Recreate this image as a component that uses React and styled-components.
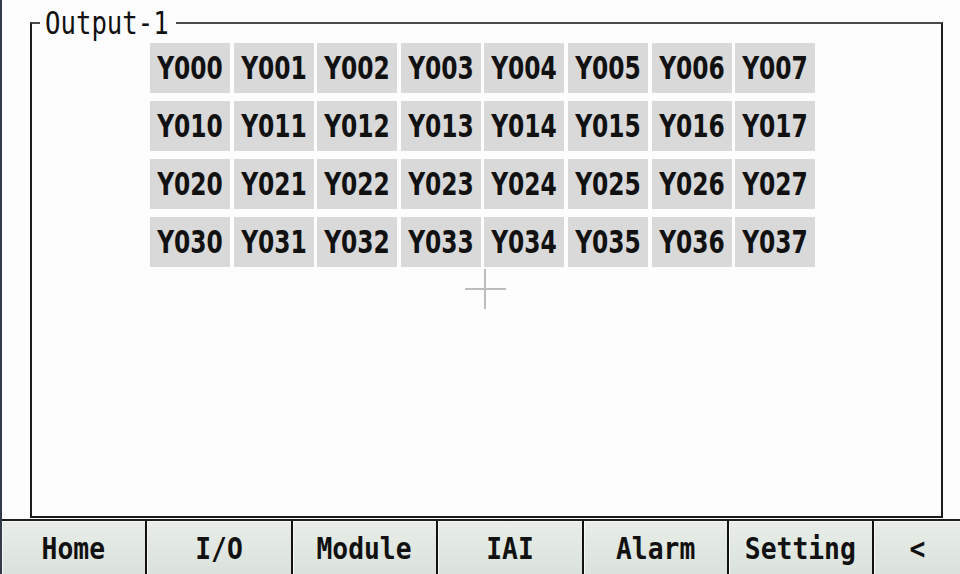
import React from "react";
import styled, { createGlobalStyle } from "styled-components";

const Global = createGlobalStyle`
  html, body { margin: 0; padding: 0; background: #fdfdfd; }
  body { width: 960px; height: 574px; overflow: hidden; }
  #root { width: 960px; height: 574px; }
`;

const Screen = styled.div`
  display: flex;
  width: 960px;
  height: 574px;
  background: #fdfdfd;
`;

const EdgeStrip = styled.div`
  flex: 0 0 2px;
  background: #333a4a;
`;

const Main = styled.div`
  flex: 1;
  display: flex;
  flex-direction: column;
  min-width: 0;
`;

const Frame = styled.fieldset`
  position: relative;
  box-sizing: border-box;
  margin: 8px 17px 1px 28px;
  height: 510px;
  padding: 5px 0 0 0;
  border: 2px solid #1c1c1c;
  border-top-color: #4a4a4a;
  min-width: 0;
`;

const Legend = styled.legend`
  margin-left: 8px;
  padding: 0 7px 0 5px;
  height: 30px;
  line-height: 30px;
  font-family: "DejaVu Sans Mono", "Liberation Mono", monospace;
  font-size: 25.7px;
  color: #111;
`;

const Tall = styled.span`
  display: inline-block;
  transform: scaleY(1.23);
  transform-origin: center;
  white-space: nowrap;
`;

const Squeeze = styled.span`
  display: inline-block;
  transform: scaleX(${(p) => p.$x || 0.82});
  transform-origin: center;
  white-space: nowrap;
`;

const Grid = styled.div`
  display: grid;
  margin-left: 118px;
  grid-template-columns: repeat(8, 80px);
  grid-auto-rows: 50px;
  column-gap: 3.6px;
  row-gap: 8px;
`;

const Cell = styled.div`
  display: flex;
  align-items: center;
  justify-content: center;
  background: #d9d9d9;
  color: #111;
  font-family: "DejaVu Sans", "Liberation Sans", sans-serif;
  font-weight: bold;
  font-size: 32px;
  line-height: 1;
`;

const CrossH = styled.div`
  position: absolute;
  left: 433px;
  top: 250px;
  width: 41px;
  height: 2px;
  background: #bdbdbd;
`;

const CrossV = styled.div`
  position: absolute;
  left: 452px;
  top: 231px;
  width: 2px;
  height: 40px;
  background: #bdbdbd;
`;

const TabBar = styled.nav`
  flex: 1;
  display: flex;
  border-top: 2px solid #1e1e1e;
`;

const Tab = styled.button`
  flex: ${(p) => (p.$last ? "1 1 auto" : "0 0 145.4px")};
  box-sizing: border-box;
  margin: 0;
  padding: 0;
  border: none;
  border-right: ${(p) => (p.$last ? "none" : "2px solid #111")};
  background: linear-gradient(#e9eee9 0%, #e1e7e1 50%, #dbe2db 100%);
  box-shadow: inset 1px 1px 0 #f6f8f6;
  display: flex;
  align-items: center;
  justify-content: center;
  font-family: "DejaVu Sans Mono", "Liberation Mono", monospace;
  font-weight: bold;
  font-size: 31px;
  color: #111;
  cursor: pointer;
`;

const rows = [0, 1, 2, 3];
const cols = [0, 1, 2, 3, 4, 5, 6, 7];
const tabs = ["Home", "I/O", "Module", "IAI", "Alarm", "Setting", "<"];

export default function App() {
  return (
    <>
      <Global />
      <Screen>
        <EdgeStrip />
        <Main>
          <Frame>
            <Legend>
              <Tall>Output-1</Tall>
            </Legend>
            <Grid>
              {rows.map((r) =>
                cols.map((c) => (
                  <Cell key={`${r}${c}`}>
                    <Squeeze $x={0.73}>{`Y0${r}${c}`}</Squeeze>
                  </Cell>
                ))
              )}
            </Grid>
            <CrossH />
            <CrossV />
          </Frame>
          <TabBar>
            {tabs.map((t, i) => (
              <Tab key={t} $last={i === tabs.length - 1}>
                <Squeeze $x={0.85}>{t}</Squeeze>
              </Tab>
            ))}
          </TabBar>
        </Main>
      </Screen>
    </>
  );
}
